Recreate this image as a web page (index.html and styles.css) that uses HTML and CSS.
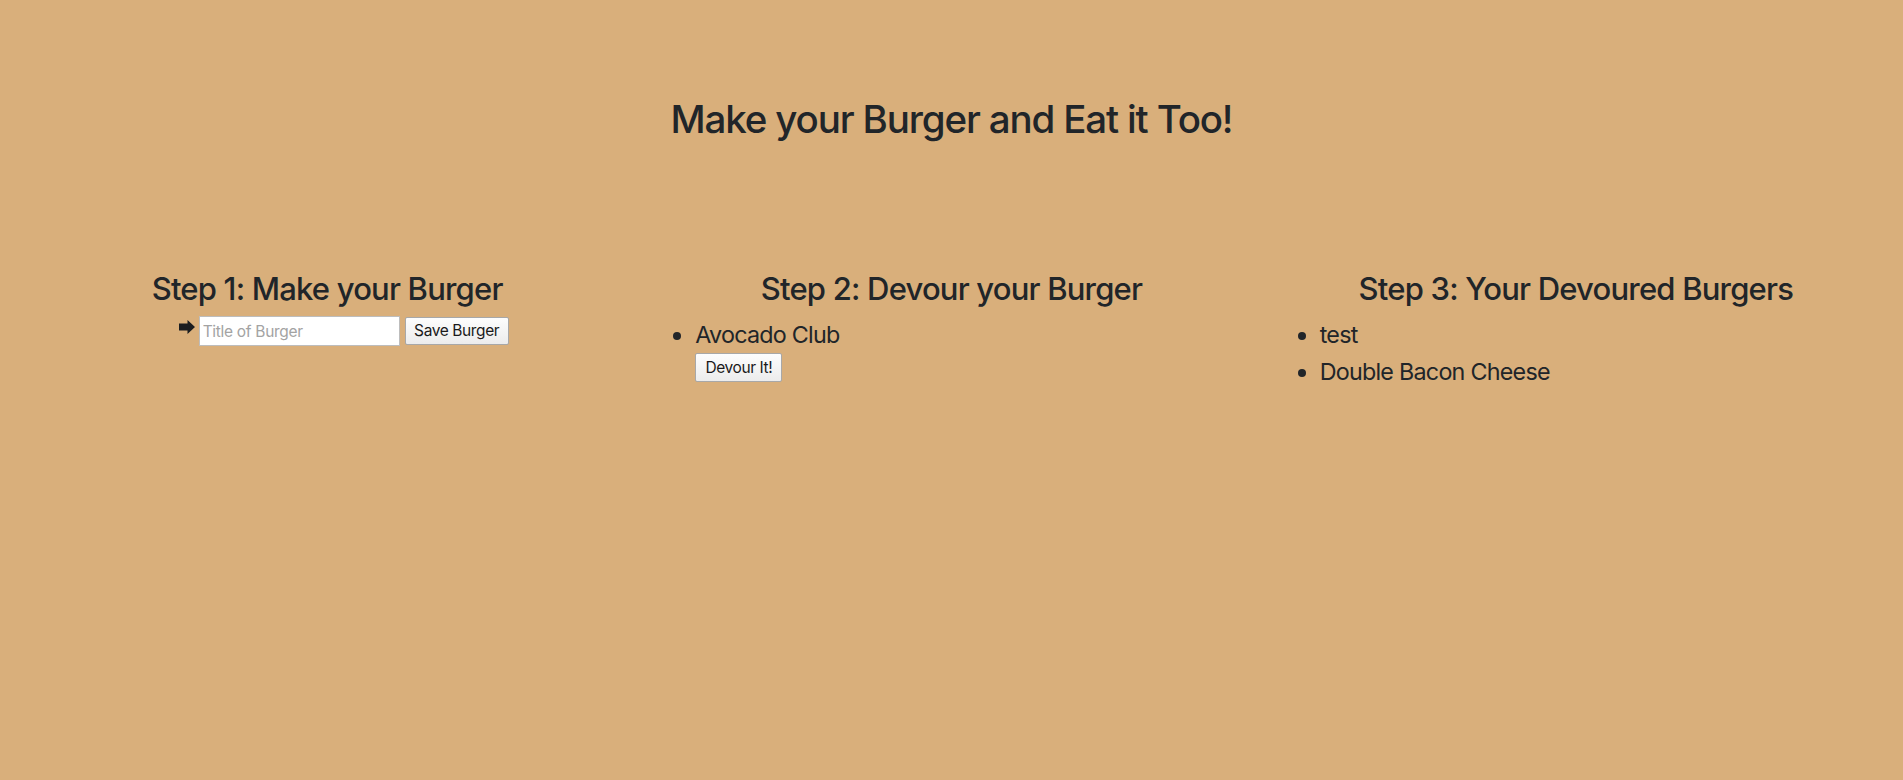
FILE: index.html
```html
<!DOCTYPE html>
<html lang="en">
<head>
<meta charset="utf-8">
<title>Eat-Da-Burger</title>
<link rel="stylesheet" href="styles.css">
</head>
<body>
<header class="hero">
  <h1 class="hero-title">Make your Burger and Eat it Too!</h1>
</header>
<main class="steps">
  <section class="step">
    <h2 class="step-title">Step 1: Make your Burger</h2>
    <form class="burger-form">
      <svg class="arrow" width="16" height="14" viewBox="0 0 16 14" aria-hidden="true"><path d="M0 3.5H8.5V0L16 7L8.5 14V10.5H0Z" fill="#1b1d20"/></svg>
      <input class="burger-input" type="text" placeholder="Title of Burger">
      <button class="btn btn-save" type="button">Save Burger</button>
    </form>
  </section>
  <section class="step">
    <h2 class="step-title">Step 2: Devour your Burger</h2>
    <ul class="burger-list">
      <li>Avocado Club<button class="btn btn-devour" type="button">Devour It!</button></li>
    </ul>
  </section>
  <section class="step">
    <h2 class="step-title">Step 3: Your Devoured Burgers</h2>
    <ul class="burger-list">
      <li>test</li>
      <li>Double Bacon Cheese</li>
    </ul>
  </section>
</main>
</body>
</html>
```
FILE: styles.css
```css
html, body {
  margin: 0;
  padding: 0;
}
body {
  background: #d9af7b;
  color: #212529;
  font-family: Inter, "Liberation Sans", sans-serif;
  font-size: 16px;
  line-height: 1.5;
  min-height: 780px;
}
.hero {
  padding-top: 95px;
  text-align: center;
}
.hero-title {
  margin: 0;
  font-size: 38.5px;
  font-weight: 500;
  line-height: 48px;
  letter-spacing: -1.15px;
}
.steps {
  display: grid;
  grid-template-columns: repeat(3, 1fr);
  padding: 0 15px;
  margin-top: 127px;
}
.step {
  padding: 0 16px;
}
.step-title {
  margin: 0 0 8px;
  text-align: center;
  font-size: 31px;
  font-weight: 500;
  line-height: 38.4px;
  letter-spacing: -0.8px;
}
.burger-form {
  display: flex;
  align-items: flex-start;
  justify-content: center;
  padding-left: 33px;
}
.arrow {
  display: block;
  flex: none;
  margin: 4px 4px 0 0;
}
.burger-input {
  box-sizing: border-box;
  flex: none;
  width: 201px;
  height: 30px;
  margin: 0;
  padding: 2px 3px;
  border: 1px solid #bdbdbd;
  background: #fff;
  font-family: inherit;
  font-size: 15.5px;
  line-height: 24px;
  letter-spacing: -0.3px;
  color: #212529;
}
.burger-input::placeholder {
  color: #a3a3a3;
}
.btn {
  box-sizing: border-box;
  flex: none;
  height: 28px;
  margin: 0;
  padding: 1px 6px;
  border: 1px solid #a8a8a8;
  border-radius: 2px;
  background: linear-gradient(#fdfdfd, #ececec);
  color: #1a1a1a;
  font-family: inherit;
  font-size: 15.5px;
  line-height: 24px;
  letter-spacing: -0.4px;
  white-space: nowrap;
}
.btn-save {
  margin: 1px 0 0 5px;
  width: 104px;
}
.btn-devour {
  display: block;
  width: 87px;
  height: 29px;
  margin-top: 0;
}
.burger-list {
  margin: 2px 0 0;
  padding-left: 40px;
  font-size: 23.3px;
  line-height: 37px;
  letter-spacing: -0.75px;
}
```
